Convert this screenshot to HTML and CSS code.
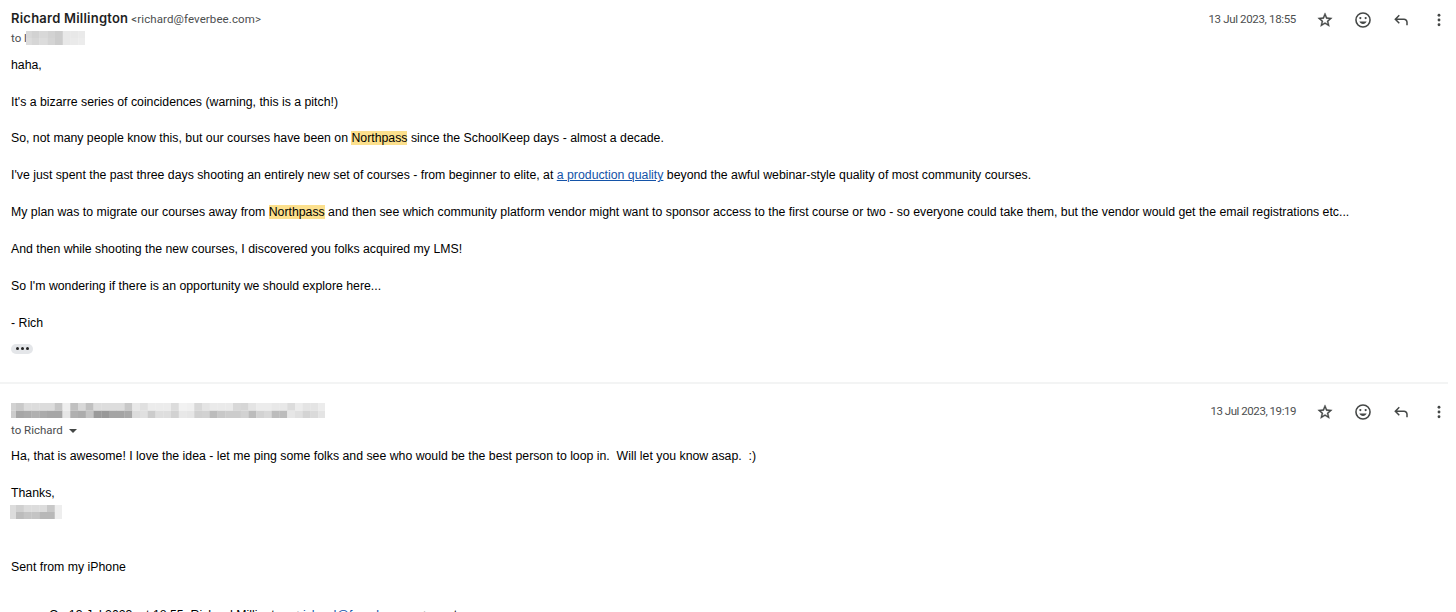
FILE: index.html
```html
<!DOCTYPE html>
<html lang="en">
<head>
    <meta charset="UTF-8">
    <title>Mail thread</title>
    <link rel="stylesheet" href="styles.css">
</head>
<body>
    <!-- Icons -->
    <svg class="icon-defs">
        <symbol id="star" viewBox="-0.5 -0.5 25 25"><path stroke="#444746" stroke-width="0.5" d="M22 9.24l-7.19-.62L12 2 9.19 8.63 2 9.24l5.46 4.73L5.82 21 12 17.27 18.18 21l-1.63-7.03L22 9.24zM12 15.4l-3.76 2.27 1-4.28-3.32-2.88 4.38-.38L12 6.1l1.71 4.04 4.38.38-3.32 2.88 1 4.28L12 15.4z"/></symbol>
        <symbol id="smile" viewBox="0.5 0.5 23 23"><path d="M12 2a10 10 0 1 0 0 20 10 10 0 0 0 0-20zm0 18a8 8 0 1 1 0-16 8 8 0 0 1 0 16z"/><circle cx="8.6" cy="9.5" r="1.4"/><circle cx="15.4" cy="9.5" r="1.4"/><path d="M7.4 14c.8 1.9 2.500 3 4.600 3s3.800-1.100 4.600-3z"/></symbol>
        <symbol id="reply" viewBox="0 0 24 24"><path d="M19 19v-4c0-.83-.29-1.54-.88-2.12C17.54 12.29 16.83 12 16 12H6.83l3.58 3.6L9 17l-6-6 6-6 1.41 1.4L6.83 10H16c1.38 0 2.56.49 3.54 1.46C20.51 12.44 21 13.62 21 15v4z"/></symbol>
        <symbol id="more" viewBox="0 0 24 24"><circle cx="12" cy="5.7" r="1.9"/><circle cx="12" cy="12" r="1.9"/><circle cx="12" cy="18.3" r="1.9"/></symbol>
    </svg>

    <div class="thread">
        <!-- First message -->
        <article class="message">
            <header class="message-header">
                <div class="sender">
                    <span class="name">Richard Millington</span>
                    <span class="email">&lt;richard@feverbee.com&gt;</span>
                </div>
                <div class="actions">
                    <time class="time-early">13 Jul 2023, 18:55</time>
                    <svg class="icon"><use href="#star"/></svg>
                    <svg class="icon"><use href="#smile"/></svg>
                    <svg class="icon"><use href="#reply"/></svg>
                    <svg class="icon"><use href="#more"/></svg>
                </div>
            </header>
            <div class="recipient">
                <span>to l</span>
                <svg class="mosaic mosaic-to" viewBox="2 0 59 14" preserveAspectRatio="none"
                     data-cells="d8 d2 d8 d2 cc e8 e8 ea|dc d6 dc d4 cc e8 ea ec"></svg>
            </div>
            <div class="message-body">
                <p>haha,</p>
                <p>It's a bizarre series of coincidences (warning, this is a pitch!)</p>
                <p>So, not many people know this, but our courses have been on <mark>Northpass</mark> since the SchoolKeep days - almost a decade.</p>
                <p>I've just spent the past three days shooting an entirely new set of courses - from beginner to elite, at <a href="#">a production quality</a> beyond the awful webinar-style quality of most community courses.</p>
                <p>My plan was to migrate our courses away from <mark>Northpass</mark> and then see which community platform vendor might want to sponsor access to the first course or two - so everyone could take them, but the vendor would get the email registrations etc...</p>
                <p>And then while shooting the new courses, I discovered you folks acquired my LMS!</p>
                <p>So I'm wondering if there is an opportunity we should explore here...</p>
                <p>- Rich</p>
            </div>
            <div class="trimmed"><i></i><i></i><i></i></div>
        </article>

        <div class="divider"></div>

        <!-- Reply -->
        <article class="message">
            <header class="message-header">
                <svg class="mosaic mosaic-name" viewBox="2.75 0 314 15.5" preserveAspectRatio="none"
                     data-cells="d2 c9 dc dc dc dc c6 ee c0 d8 c0 dd dd dd dd c8 e8 e0 ec ec ec dc f2 f0 d8 e4 ea ea ea d8 d6 e4 ec ec e8 e8 dc ec e4 e4 ec|cc a6 aa b0 aa a6 a6 e6 b0 ac c4 9a 98 a4 a4 a8 dc e0 cc de de d2 e8 e6 d0 d2 bc c8 cc cc d2 bc d2 d8 bc bc e6 e0 d4 da e4"></svg>
                <div class="actions">
                    <time>13 Jul 2023, 19:19</time>
                    <svg class="icon"><use href="#star"/></svg>
                    <svg class="icon"><use href="#smile"/></svg>
                    <svg class="icon"><use href="#reply"/></svg>
                    <svg class="icon"><use href="#more"/></svg>
                </div>
            </header>
            <div class="recipient"><span>to Richard</span><b class="caret"></b></div>
            <div class="message-body">
                <p>Ha, that is awesome! I love the idea - let me ping some folks and see who would be the best person to loop in.&nbsp; Will let you know asap.&nbsp; :)</p>
                <div>Thanks,</div>
                <div class="signature">
                    <svg class="mosaic mosaic-sign" viewBox="1.75 0 52.5 14" preserveAspectRatio="none"
                         data-cells="dc d0 dc dc dc c8 ee|dc bc c4 c4 b8 b8 ee"></svg>
                </div>
                <div class="phone">Sent from my iPhone</div>
                <blockquote>On 13 Jul 2023, at 18:55, Richard Millington &lt;<a href="#">richard@feverbee.com</a>&gt; wrote:</blockquote>
            </div>
        </article>
    </div>

    <script>
        // Fill the redacted blocks, one grey rect per cell
        document.querySelectorAll('.mosaic').forEach(svg => {
            const rows = svg.dataset.cells.split('|');
            const h = svg.viewBox.baseVal.height / rows.length;
            rows.forEach((row, y) => {
                row.split(' ').forEach((c, x) => {
                    const rect = document.createElementNS('http://www.w3.org/2000/svg', 'rect');
                    rect.setAttribute('x', x * 7.75);
                    rect.setAttribute('y', y * h);
                    rect.setAttribute('width', 8);
                    rect.setAttribute('height', h);
                    rect.setAttribute('fill', '#' + c + c + c);
                    svg.appendChild(rect);
                });
            });
        });
    </script>
</body>
</html>
```

FILE: styles.css
```css
* { margin: 0; padding: 0; box-sizing: border-box; }
body { font-family: "Liberation Sans", Arial, sans-serif; background: white; color: #000; }

.icon-defs { display: none; }

.thread { height: 612px; overflow: hidden; }

.message { padding: 7px 8.5px 0 11px; }

.message-header {
    display: flex; justify-content: space-between; align-items: center;
    height: 23px;
}

.sender { display: flex; align-items: baseline; gap: 3px; margin-top: -1px; }

.name {
    font: 600 13px Inter, sans-serif; letter-spacing: 0.23px;
    color: #1f1f1f;
}

.email, time, .recipient {
    font-family: Roboto, sans-serif; font-size: 11.5px;
    color: #4c4e4f;
}

.email { letter-spacing: 0.1px; }
time { letter-spacing: -0.45px; margin-right: -0.5px; }
.time-early { letter-spacing: -0.34px; }

.actions { display: flex; align-items: center; gap: 20px; }

.icon { width: 18px; height: 18px; fill: #444746; position: relative; top: 1px; }

.recipient { display: flex; align-items: center; height: 15px; }

.caret {
    border: 4px solid transparent; border-top-color: #444746;
    border-bottom: 0; margin: 1px 0 0 6px;
}

.mosaic { display: block; overflow: hidden; }
.mosaic-to { width: 59px; height: 14px; margin: 1px 0 0 -1px; }
.mosaic-name { width: 314px; height: 15.5px; position: relative; top: -1px; }
.mosaic-sign { width: 52.5px; height: 14px; }

.message-body {
    font-size: 12.3px; line-height: 18.43px; white-space: nowrap;
    margin-top: 10.7px;
}

.message-body p { margin-bottom: 18.43px; }
.message-body p:last-child { margin-bottom: 0; }

mark { background: #fce08d; color: inherit; }
a { color: #1453a8; }

.trimmed {
    display: flex; align-items: center; justify-content: center; gap: 2px;
    width: 22px; height: 10px; margin-top: 11.8px;
    border-radius: 5px; background: #e4e6e9;
}

.trimmed i { width: 3px; height: 3px; border-radius: 50%; background: #222; }

.divider { width: 1448px; height: 2px; margin: 28px 0 9px; background: #f3f4f4; }

.divider + .message .message-body { margin-top: 9.5px; }

.signature { height: 18.43px; margin-left: -1.5px; padding-top: 2px; }
.phone { margin-top: 36.86px; }
blockquote { margin: 30px 0 0 38px; }
```
